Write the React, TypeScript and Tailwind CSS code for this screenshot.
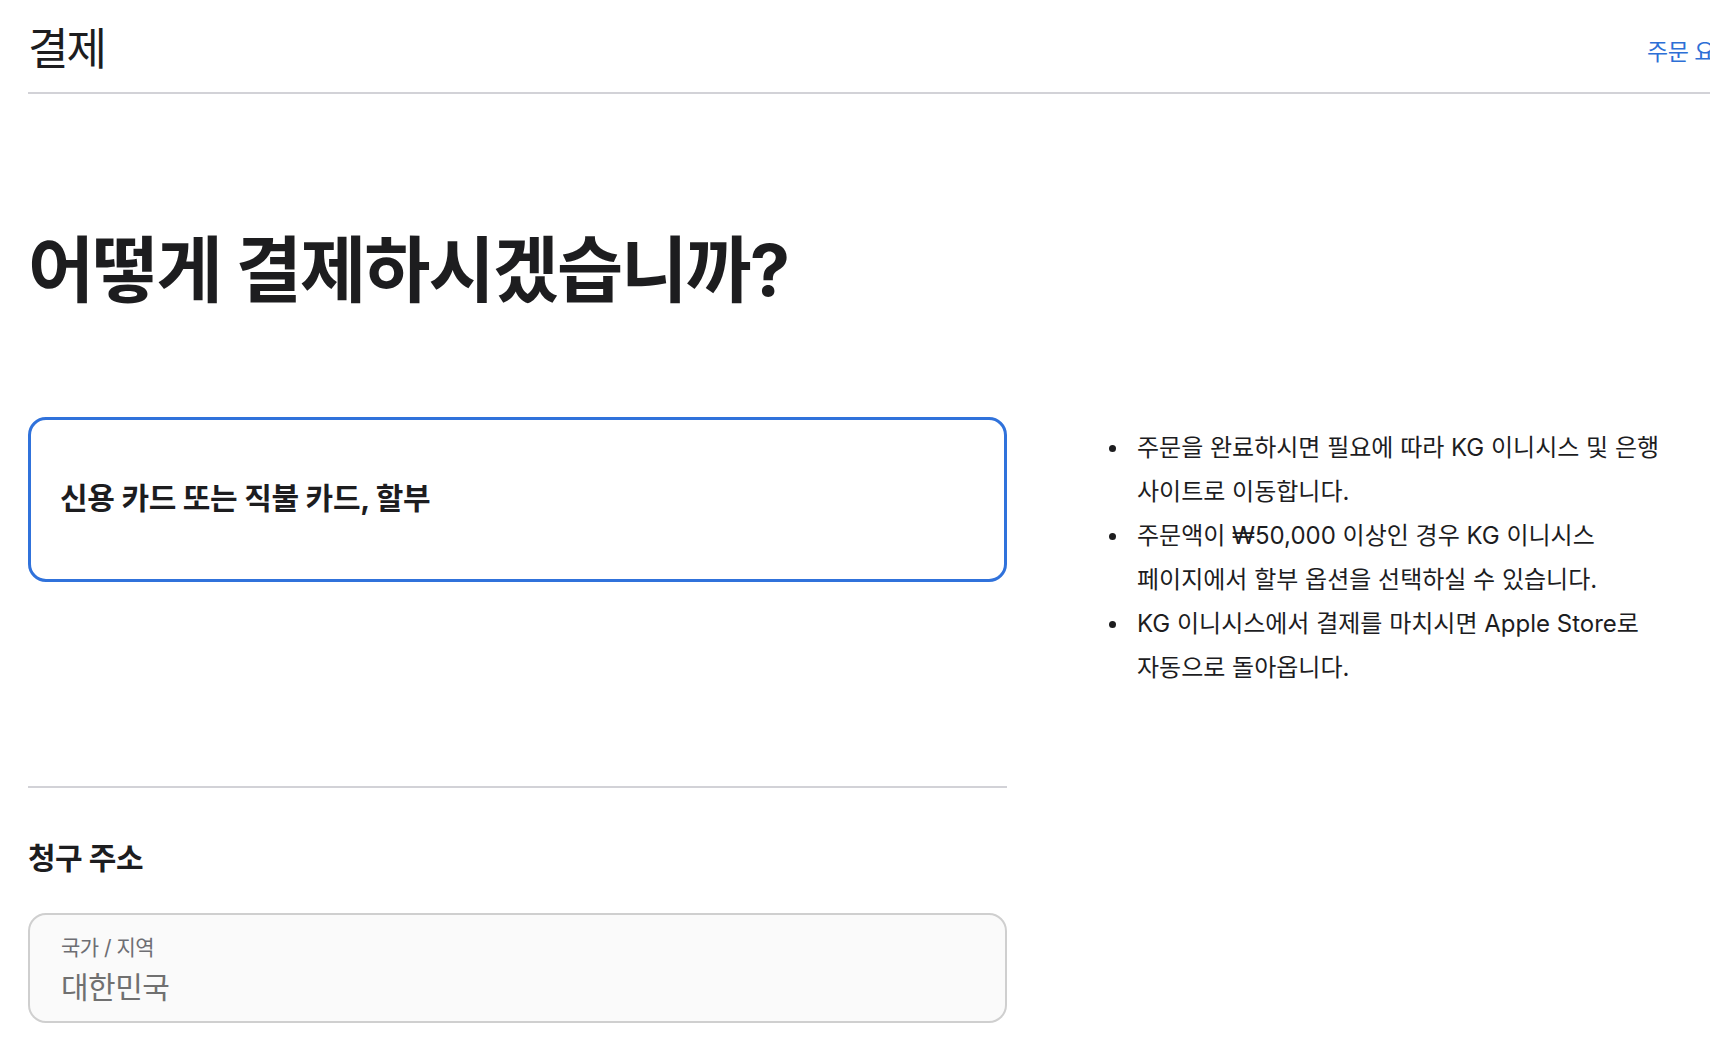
const notes: [string, string][] = [
  ["주문을 완료하시면 필요에 따라 KG 이니시스 및 은행", "사이트로 이동합니다."],
  ["주문액이 ₩50,000 이상인 경우 KG 이니시스", "페이지에서 할부 옵션을 선택하실 수 있습니다."],
  ["KG 이니시스에서 결제를 마치시면 Apple Store로", "자동으로 돌아옵니다."],
];

export default function App() {
  return (
    <div className="w-[1710px] h-[1040px] overflow-hidden bg-white text-[#1d1d1f] font-['Inter','Noto_Sans_CJK_KR',sans-serif]">
      <div className="pl-[28px]">
        {/* ── Header ─────────────────────────────────────────── */}
        <header className="flex items-start w-[1800px] pt-[27px] pb-[21px] border-b-2 border-[#d2d2d7]">
          <h1 className="w-[1619px] shrink-0 text-[44px] leading-[44px] tracking-[-2px] font-normal">
            결제
          </h1>
          <a className="mt-[13px] whitespace-nowrap text-[23px] leading-[24px] tracking-[-0.5px] text-[#2d6fd6]">
            주문 요약 보기: ₩1,690,000
          </a>
        </header>

        <h2 className="mt-[136px] text-[72px] leading-[80px] tracking-[-2px] font-bold">
          어떻게 결제하시겠습니까?
        </h2>

        {/* ── Payment + notes ────────────────────────────────── */}
        <div className="mt-[107px] grid grid-cols-[979px_1fr] gap-x-[96px] items-start">
          <div>
            <div className="h-[165px] flex items-center pl-[29px] pb-[3px] border-[3px] border-[#3072db] rounded-[18px]">
              <span className="text-[30px] leading-[34px] tracking-[-0.3px] font-bold">
                신용 카드 또는 직불 카드, 할부
              </span>
            </div>

            <div className="mt-[204px] border-t-2 border-[#d2d2d7]" />

            <h3 className="mt-[53px] text-[30px] leading-[34px] tracking-[-0.5px] font-bold">
              청구 주소
            </h3>

            <div className="mt-[38px] h-[110px] pt-[21px] pl-[31px] border-2 border-[#cfcfcf] rounded-[18px] bg-[#fafafa]">
              <div className="text-[21px] leading-[24px] tracking-[-0.5px] text-[#6e6e73]">
                국가 / 지역
              </div>
              <div className="mt-[11px] text-[30px] leading-[32px] tracking-[-0.5px] text-[#707070]">
                대한민국
              </div>
            </div>
          </div>

          <ul className="mt-[9px]">
            {notes.map(([a, b], i) => (
              <li key={i} className="flex text-[24px] leading-[44px]">
                <span className="w-[34px] h-[44px] shrink-0 flex items-center pl-[6px]">
                  <span className="w-[7px] h-[7px] rounded-full bg-[#1d1d1f]" />
                </span>
                <span className="whitespace-nowrap">
                  {a}
                  <br />
                  {b}
                </span>
              </li>
            ))}
          </ul>
        </div>
      </div>
    </div>
  );
}
